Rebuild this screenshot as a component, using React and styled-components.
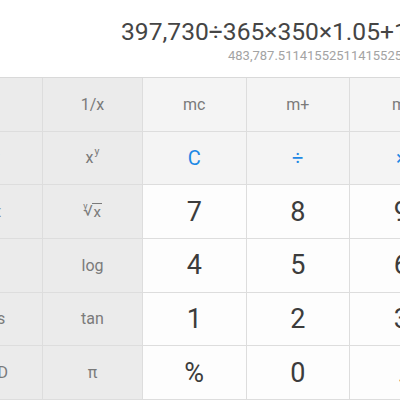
import React from 'react';
import styled, { createGlobalStyle } from 'styled-components';

const GlobalStyle = createGlobalStyle`
  html, body {
    margin: 0;
    padding: 0;
    overflow: hidden;
    background: #fff;
  }
  body {
    font-family: Roboto, "Noto Sans", "Liberation Sans", sans-serif;
  }
`;

const Screen = styled.div`
  width: 400px;
  height: 400px;
  display: flex;
  flex-direction: column;
  overflow: hidden;
  background: #fff;
`;

const Display = styled.div`
  height: 78px;
  flex: none;
  box-sizing: border-box;
  padding: 17px 0 0 121px;
  border-bottom: 1px solid #d9d9d9;
  white-space: nowrap;
  overflow: hidden;
`;

const Expression = styled.div`
  font-size: 24.6px;
  color: #454545;
  line-height: 29px;
`;

const Result = styled.div`
  margin: 2px 0 0 107px;
  font-size: 13px;
  line-height: 15px;
  color: #a3a3a3;
`;

const Keypad = styled.div`
  flex: 1;
  display: flex;
  margin-left: -57px;
`;

const SciPanel = styled.div`
  display: grid;
  grid-template-columns: repeat(2, 100px);
  grid-template-rows: repeat(6, 1fr);
  background: #ebebeb;
`;

const NumPad = styled.div`
  display: grid;
  grid-template-columns: repeat(4, 103.5px);
  grid-template-rows: repeat(6, 1fr);
`;

const backgrounds = {
  sci: '#ebebeb',
  mem: '#f4f4f4',
  op: '#f4f4f4',
  digit: '#fdfdfd',
};

const Key = styled.button`
  box-sizing: border-box;
  border: 0;
  border-right: 1px solid #dddddd;
  border-bottom: 1px solid #dddddd;
  margin: 0;
  padding: 0;
  display: flex;
  align-items: center;
  justify-content: center;
  font-family: inherit;
  background: ${(p) => backgrounds[p.$tone]};
  color: ${(p) => (p.$accent ? '#1e88e5' : p.$tone === 'digit' ? '#3c3c3c' : '#7a7a7a')};
  font-size: ${(p) => (p.$tone === 'digit' ? '27px' : p.$accent ? '20px' : '16px')};
  grid-row: ${(p) => (p.$tall ? 'span 2' : 'auto')};
`;

const Sup = styled.span`
  font-size: 0.65em;
  position: relative;
  top: -0.6em;
  margin-left: 1px;
`;

const Root = styled.span`
  display: inline-flex;
  align-items: flex-start;
  font-size: 15px;
  line-height: 16px;
  .idx {
    font-size: 9px;
    line-height: 9px;
    margin-right: -4px;
    margin-top: -1px;
  }
  .rad {
    border-top: 1px solid #7a7a7a;
    padding: 0 1px;
  }
`;

const sciKeys = [
  ['e', '1/x'],
  [<>x<Sup>2</Sup></>, <>x<Sup>y</Sup></>],
  ['√x', <Root><span className="idx">y</span>√<span className="rad">x</span></Root>],
  ['ln', 'log'],
  ['cos', 'tan'],
  ['RAD', 'π'],
];

const numKeys = [
  [{ l: 'mc', t: 'mem' }, { l: 'm+', t: 'mem' }, { l: 'm-', t: 'mem' }, { l: 'mr', t: 'mem' }],
  [{ l: 'C', t: 'op', a: true }, { l: '÷', t: 'op', a: true }, { l: '×', t: 'op', a: true }, { l: '⌫', t: 'op', a: true }],
  [{ l: '7' }, { l: '8' }, { l: '9' }, { l: '−', t: 'op', a: true }],
  [{ l: '4' }, { l: '5' }, { l: '6' }, { l: '+', t: 'op', a: true }],
  [{ l: '1' }, { l: '2' }, { l: '3' }, { l: '=', t: 'op', a: true, tall: true }],
  [{ l: '%' }, { l: '0' }, { l: '.' }],
];

export default function App() {
  return (
    <>
      <GlobalStyle />
      <Screen>
        <Display>
          <Expression>397,730÷365×350×1.05+1</Expression>
          <Result>483,787.51141552511415525</Result>
        </Display>
        <Keypad>
          <SciPanel>
            {sciKeys.flat().map((label, i) => (
              <Key key={i} $tone="sci">{label}</Key>
            ))}
          </SciPanel>
          <NumPad>
            {numKeys.flat().map((k, i) => (
              <Key key={i} $tone={k.t || 'digit'} $accent={k.a} $tall={k.tall}>
                {k.l}
              </Key>
            ))}
          </NumPad>
        </Keypad>
      </Screen>
    </>
  );
}
